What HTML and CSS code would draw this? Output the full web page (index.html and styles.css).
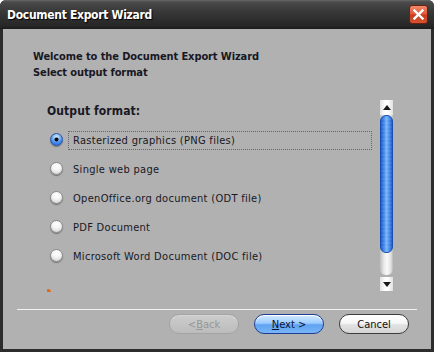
FILE: index.html
```html
<!DOCTYPE html>
<html>
<head>
<meta charset="utf-8">
<link rel="stylesheet" href="styles.css">
</head>
<body>
<div class="window">
  <div class="titlebar">
    <span class="title">Document Export Wizard</span>
    <span class="close">
      <svg width="11" height="11" viewBox="0 0 11 11"><path d="M1.5 1.5 L9.5 9.5 M9.5 1.5 L1.5 9.5" stroke="#fff" stroke-width="2.4" stroke-linecap="square"/></svg>
    </span>
  </div>
  <div class="client">
    <div class="header">
      <div>Welcome to the Document Export Wizard</div>
      <div>Select output format</div>
    </div>
    <div class="main">
      <div class="list">
        <div class="group-title">Output format:</div>
        <div class="row"><span class="radio checked"></span><span class="label focus">Rasterized graphics (PNG files)</span></div>
        <div class="row"><span class="radio"></span><span class="label">Single web page</span></div>
        <div class="row"><span class="radio"></span><span class="label">OpenOffice.org document (ODT file)</span></div>
        <div class="row"><span class="radio"></span><span class="label">PDF Document</span></div>
        <div class="row"><span class="radio"></span><span class="label">Microsoft Word Document (DOC file)</span></div>
        <span class="peek"></span>
      </div>
      <div class="scrollbar">
        <div class="sb-btn up"><span class="arrow-up"></span></div>
        <div class="track"><div class="thumb"></div></div>
        <div class="sb-btn down"><span class="arrow-down"></span></div>
      </div>
    </div>
    <div class="separator"></div>
    <div class="buttons">
      <span class="btn disabled">&lt; <u>B</u>ack</span>
      <span class="btn primary"><u>N</u>ext &gt;</span>
      <span class="btn">Cancel</span>
    </div>
  </div>
</div>
</body>
</html>
```
FILE: styles.css
```css
html, body {
  margin: 0;
  padding: 0;
  background: #ffffff;
}

.window {
  width: 434px;
  height: 352px;
  border-radius: 6px 6px 0 0;
  overflow: hidden;
  background: #2c2c2c;
  box-sizing: border-box;
  font-family: "DejaVu Sans Condensed", "DejaVu Sans", sans-serif;
  font-stretch: condensed;
}

.titlebar {
  height: 29px;
  display: flex;
  align-items: center;
  padding-left: 7px;
  box-sizing: border-box;
  background: linear-gradient(#6a6a6a 0, #4a4a4a 2px, #383838 40%, #262626 90%, #1c1c1c 100%);
}

.title {
  color: #ffffff;
  font-weight: bold;
  font-size: 12px;
  letter-spacing: -0.3px;
  text-shadow: 1px 1px 1px #000;
  margin-top: 1px;
}

.close {
  margin-left: auto;
  margin-right: 6px;
  width: 19px;
  height: 19px;
  box-sizing: border-box;
  border-radius: 3px;
  border: 1px solid #6d2010;
  background: linear-gradient(#f08a6a 0, #e2583a 45%, #c83c22 55%, #d4532f 100%);
  display: flex;
  align-items: center;
  justify-content: center;
}

.client {
  margin: 0 3px;
  width: 428px;
  height: 320px;
  background: #b1b1b1;
  color: #181824;
  font-size: 11px;
  box-sizing: border-box;
  padding-top: 20px;
}

.header {
  padding-left: 30px;
  font-weight: bold;
  line-height: 16px;
  letter-spacing: -0.1px;
}

.main {
  margin-top: 19px;
  margin-left: 44px;
  width: 346px;
  height: 192px;
  display: flex;
}

.list {
  flex: 1;
  overflow: hidden;
  padding-top: 3px;
  box-sizing: border-box;
}

.group-title {
  font-weight: bold;
  font-size: 12px;
  line-height: 16px;
  letter-spacing: 0.1px;
  margin-bottom: 7px;
}

.row {
  height: 29px;
  display: flex;
  align-items: center;
}

.radio {
  width: 13px;
  height: 13px;
  margin-left: 3px;
  margin-right: 5px;
  margin-top: -2px;
  border-radius: 50%;
  box-sizing: border-box;
  border: 1px solid #8c8c8c;
  background: radial-gradient(circle at 50% 30%, #ffffff 0, #f6f6f6 40%, #d6d6d6 80%, #bdbdbd 100%);
  box-shadow: 0 1px 1px rgba(0, 0, 0, 0.35);
  flex: none;
}

.radio.checked {
  border-color: #2a55a8;
  background:
    radial-gradient(circle at 50% 50%, #0a0a0a 0, #0a0a0a 1.6px, rgba(0,0,0,0) 2.4px),
    radial-gradient(circle at 50% 28%, #e6f2ff 0, #8cc0fb 30%, #3b86ee 65%, #1c5ccf 100%);
}

.label {
  flex: 1;
  margin-right: 8px;
  padding: 2px 4px;
  line-height: 13px;
  letter-spacing: 0.3px;
  border: 1px dotted transparent;
  white-space: nowrap;
}

.label.focus {
  border-color: #666;
}

.peek {
  display: block;
  margin-top: 18px;
  margin-left: -1px;
  width: 5px;
  height: 8px;
  border-radius: 50% 50% 0 0;
  background: #dc6a1e;
}

.scrollbar {
  width: 13px;
  display: flex;
  flex-direction: column;
  height: 191px;
}

.sb-btn {
  background: linear-gradient(90deg, #e2e2e2 0, #ffffff 40%, #ffffff 60%, #e0e0e0 100%);
  display: flex;
  align-items: center;
  justify-content: center;
}

.sb-btn.up {
  height: 15px;
}

.sb-btn.down {
  height: 14px;
  margin-top: 2px;
}

.arrow-up {
  width: 0;
  height: 0;
  border-left: 4px solid transparent;
  border-right: 4px solid transparent;
  border-bottom: 5px solid #1a1a1a;
  margin-top: -1px;
}

.arrow-down {
  width: 0;
  height: 0;
  border-left: 4px solid transparent;
  border-right: 4px solid transparent;
  border-top: 5px solid #1a1a1a;
  margin-top: 1px;
}

.track {
  height: 160px;
  border-radius: 0 0 6px 6px;
  background: linear-gradient(90deg, #bdbdbd 0, #e8e8e8 30%, #fafafa 55%, #dedede 85%, #b8b8b8 100%);
}

.thumb {
  height: 138px;
  border-radius: 6px;
  box-sizing: border-box;
  border: 1px solid #1a4fb0;
  background:
    repeating-linear-gradient(0deg, rgba(255,255,255,0.06) 0, rgba(255,255,255,0.06) 2px, rgba(0,0,0,0) 2px, rgba(0,0,0,0) 4px),
    linear-gradient(90deg, #1d5ccc 0, #3f86ee 25%, #7ab4f6 50%, #4b8eee 75%, #1d5ccc 100%);
}

.separator {
  margin: 17px 14px 0 14px;
  height: 1px;
  background: #f2f2f2;
}

.buttons {
  margin-top: 4px;
  display: flex;
  justify-content: flex-end;
  gap: 15px;
  padding-right: 22px;
}

.btn {
  width: 70px;
  height: 20px;
  box-sizing: border-box;
  border-radius: 10px;
  border: 1px solid #3c3c3c;
  background: linear-gradient(#ffffff 0, #f6f6f6 45%, #e2e2e2 55%, #d4d4d4 100%);
  display: flex;
  align-items: center;
  justify-content: center;
  font-size: 11px;
  color: #101010;
  box-shadow: inset 0 1px 0 #ffffff;
}

.btn.primary {
  border-color: #1c3c92;
  background: linear-gradient(#d4ebff 0, #9ccbff 45%, #5fa2f0 55%, #79b6fa 100%);
  color: #0c1030;
}

.btn.disabled {
  border-color: #a4a4a4;
  background: linear-gradient(#cdcdcd 0, #c4c4c4 50%, #bcbcbc 100%);
  color: #979797;
  box-shadow: inset 0 1px 0 #d6d6d6;
}
```
